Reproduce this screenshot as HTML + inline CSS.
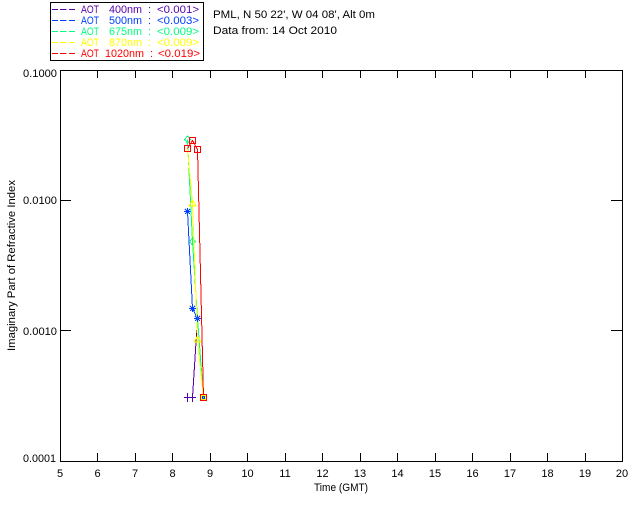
<!DOCTYPE html>
<html><head><meta charset="utf-8"><style>
html,body{margin:0;padding:0;background:#fff}
svg{display:block}
text{font-family:"Liberation Sans",sans-serif;font-size:11px;fill:#000}
</style></head><body>
<svg width="640" height="512" viewBox="0 0 640 512" xmlns="http://www.w3.org/2000/svg">
<rect width="640" height="512" fill="#fff"/>
<g shape-rendering="crispEdges" fill="none" stroke-width="1">
<rect x="50.5" y="2.5" width="153" height="58" stroke="#000"/>
<rect x="60.5" y="70.5" width="562" height="391" stroke="#000"/>
<path stroke="#000" d="M97.5 70v8M135.5 70v8M172.5 70v8M210.5 70v8M247.5 70v8M285.5 70v8M322.5 70v8M360.5 70v8M397.5 70v8M435.5 70v8M472.5 70v8M510.5 70v8M547.5 70v8M585.5 70v8M97.5 461v-8M135.5 461v-8M172.5 461v-8M210.5 461v-8M247.5 461v-8M285.5 461v-8M322.5 461v-8M360.5 461v-8M397.5 461v-8M435.5 461v-8M472.5 461v-8M510.5 461v-8M547.5 461v-8M585.5 461v-8M60 200.5h11M60 330.5h11M622 200.5h-11M622 330.5h-11"/>
<path stroke="#5500aa" d="M52 9.5h6M60 9.5h6.500M69 9.5h6"/>
<path stroke="#0040ff" d="M52 20.500h6M60 20.500h6.500M69 20.500h6"/>
<path stroke="#00ff80" d="M52 31.500h6M60 31.500h6.500M69 31.500h6"/>
<path stroke="#ffff00" d="M52 42.500h6M60 42.500h6.500M69 42.500h6"/>
<path stroke="#ff0000" d="M52 53.500h6M60 53.500h6.500M69 53.500h6"/>
</g>
<g fill="none" stroke-width="1" shape-rendering="crispEdges">
<path stroke="#5500aa" d="M192.500 397.500L197.500 318.500"/>
<path stroke="#5500aa" d="M184 397.500h12M187.500 393v9M192.500 393v9"/>
<path stroke="#0040ff" d="M187.500 211.500L192.500 308.500L197.500 318.500L203.500 397.500"/>
<path stroke="#0040ff" d="M184 211.500h7M187.500 208v7M185 209l5 5M190 209l-5 5M189 308.500h7M192.500 305v7M190 306l5 5M195 306l-5 5"/>
<path stroke="#00ff80" d="M187.500 139.500L192.500 241.500L197.500 318.500L203.500 397.500"/>
<path stroke="#00ff80" d="M187.500 136l3 3.500l-3 3.500l-3-3.500zM192.500 238l3 3.500l-3 3.500l-3-3.500z"/>
<path stroke="#ffff00" d="M187.500 148.500L192.500 203.500L197.500 339.500L203.500 397.500"/>
<path stroke="#ffff00" d="M192.500 200l3.500 6h-7zM197.500 336l3.500 6h-7z"/>
<path stroke="#ff0000" d="M187.500 148.500L192.500 140.500L197.500 149.500L203.500 397.500"/>
<path stroke="#0040ff" d="M194 318.500h7M197.500 315v7M195 316l5 5M200 316l-5 5"/>
<path d="M197 318h1v1h-1z" fill="#00a080"/>
</g>
<g fill="none" stroke="#ff0000" stroke-width="1" shape-rendering="crispEdges">
<rect x="184.500" y="145.500" width="6" height="6"/>
<rect x="189.500" y="137.500" width="6" height="6"/>
<rect x="194.500" y="146.500" width="6" height="6"/>
</g>
<g shape-rendering="crispEdges">
<rect x="200" y="394" width="7" height="7" fill="#ff0000"/>
<rect x="201" y="395" width="5" height="5" fill="#ffff00"/>
<rect x="202" y="396" width="3" height="3" fill="#0040ff"/>
<rect x="203" y="397" width="1" height="1" fill="#00ff80"/>
</g>

<g>
<text x="81" y="13" style="fill:#5500aa" textLength="18" lengthAdjust="spacingAndGlyphs">AOT</text>
<text x="109" y="13" style="fill:#5500aa" textLength="33" lengthAdjust="spacingAndGlyphs">400nm</text>
<text x="148" y="13" style="fill:#5500aa">:</text>
<text x="157" y="13" style="fill:#5500aa" textLength="42" lengthAdjust="spacingAndGlyphs">&lt;0.001&gt;</text>

<text x="81" y="24" style="fill:#0040ff" textLength="18" lengthAdjust="spacingAndGlyphs">AOT</text>
<text x="109" y="24" style="fill:#0040ff" textLength="33" lengthAdjust="spacingAndGlyphs">500nm</text>
<text x="148" y="24" style="fill:#0040ff">:</text>
<text x="157" y="24" style="fill:#0040ff" textLength="42" lengthAdjust="spacingAndGlyphs">&lt;0.003&gt;</text>

<text x="81" y="35" style="fill:#00ff80" textLength="18" lengthAdjust="spacingAndGlyphs">AOT</text>
<text x="109" y="35" style="fill:#00ff80" textLength="33" lengthAdjust="spacingAndGlyphs">675nm</text>
<text x="148" y="35" style="fill:#00ff80">:</text>
<text x="157" y="35" style="fill:#00ff80" textLength="42" lengthAdjust="spacingAndGlyphs">&lt;0.009&gt;</text>

<text x="81" y="46" style="fill:#ffff00" textLength="18" lengthAdjust="spacingAndGlyphs">AOT</text>
<text x="109" y="46" style="fill:#ffff00" textLength="33" lengthAdjust="spacingAndGlyphs">870nm</text>
<text x="148" y="46" style="fill:#ffff00">:</text>
<text x="157" y="46" style="fill:#ffff00" textLength="42" lengthAdjust="spacingAndGlyphs">&lt;0.009&gt;</text>

<text x="81" y="57" style="fill:#ff0000" textLength="18" lengthAdjust="spacingAndGlyphs">AOT</text>
<text x="105" y="57" style="fill:#ff0000" textLength="39" lengthAdjust="spacingAndGlyphs">1020nm</text>
<text x="150" y="57" style="fill:#ff0000">:</text>
<text x="158" y="57" style="fill:#ff0000" textLength="42" lengthAdjust="spacingAndGlyphs">&lt;0.019&gt;</text>

<text x="213" y="18" textLength="162" lengthAdjust="spacingAndGlyphs">PML, N 50 22', W 04 08', Alt 0m</text>
<text x="213" y="34" textLength="124" lengthAdjust="spacingAndGlyphs">Data from: 14 Oct 2010</text>

<text x="23" y="77" textLength="34" lengthAdjust="spacingAndGlyphs">0.1000</text>
<text x="23" y="204" textLength="34" lengthAdjust="spacingAndGlyphs">0.0100</text>
<text x="23" y="335" textLength="34" lengthAdjust="spacingAndGlyphs">0.0010</text>
<text x="23" y="462" textLength="33" lengthAdjust="spacingAndGlyphs">0.0001</text>

<g text-anchor="middle">
<text x="60" y="477">5</text><text x="97.500" y="477">6</text><text x="135" y="477">7</text><text x="172.500" y="477">8</text><text x="210" y="477">9</text>
<text x="247.500" y="477">10</text><text x="285" y="477">11</text><text x="322.500" y="477">12</text><text x="360" y="477">13</text><text x="397.500" y="477">14</text><text x="435" y="477">15</text><text x="472.500" y="477">16</text><text x="510" y="477">17</text><text x="547.500" y="477">18</text><text x="585" y="477">19</text><text x="622" y="477">20</text>
</g>
<text x="314" y="491" textLength="54" lengthAdjust="spacingAndGlyphs">Time (GMT)</text>
<text transform="translate(15 351) rotate(-90)" textLength="171" lengthAdjust="spacingAndGlyphs">Imaginary Part of Refractive Index</text>
</g>
</svg>
</body></html>
